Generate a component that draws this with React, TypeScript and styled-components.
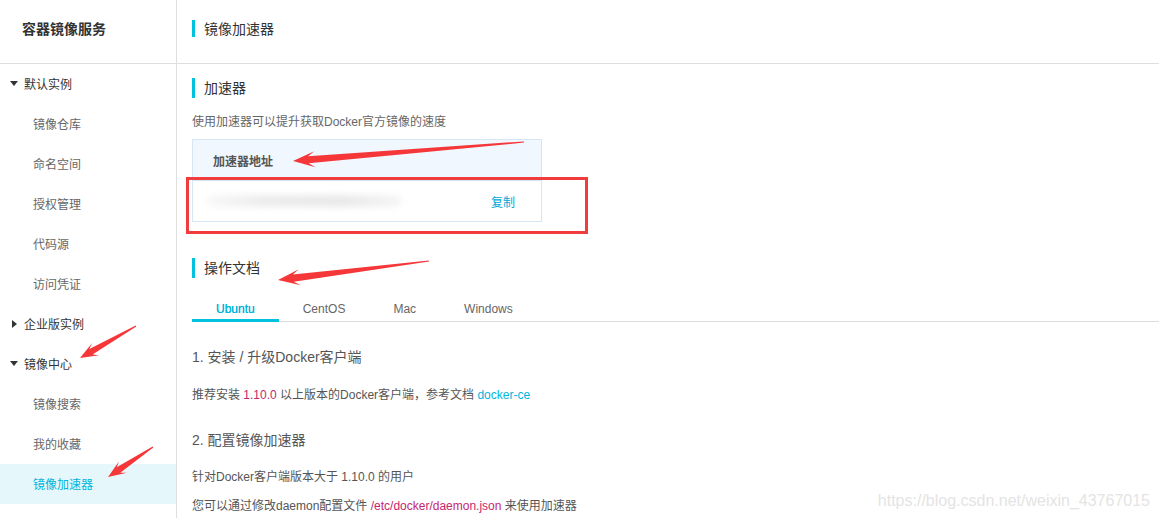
import styled, { createGlobalStyle } from "styled-components";

const GlobalStyle = createGlobalStyle`
  html, body {
    margin: 0;
    padding: 0;
    background: #fff;
  }
  body {
    font-family: "Liberation Sans", "Noto Sans CJK SC", sans-serif;
    color: #333;
  }
`

type INavItem = {
  text: string,
  level: number,
  open?: boolean,
  active?: boolean
}

const navItems = [
  {text: '默认实例', level: 0, open: true},
  {text: '镜像仓库', level: 1},
  {text: '命名空间', level: 1},
  {text: '授权管理', level: 1},
  {text: '代码源', level: 1},
  {text: '访问凭证', level: 1},
  {text: '企业版实例', level: 0, open: false},
  {text: '镜像中心', level: 0, open: true},
  {text: '镜像搜索', level: 1},
  {text: '我的收藏', level: 1},
  {text: '镜像加速器', level: 1, active: true},
] as INavItem[]

const tabs = ['Ubuntu', 'CentOS', 'Mac', 'Windows']

type Pt = [number, number]

// tapered arrow polygon, thin at the tail and a swept-back head at the tip
const arrowPoints = (tip: Pt, tail: Pt, len: number, head: number, neck: number) => {
  const dx = tip[0] - tail[0]
  const dy = tip[1] - tail[1]
  const l = Math.hypot(dx, dy)
  const ux = dx / l, uy = dy / l
  const nx = -uy, ny = ux
  const at = (back: number, side: number): Pt => [tip[0] - ux * back + nx * side, tip[1] - uy * back + ny * side]
  const pts: Pt[] = [
    [tail[0] + nx * 0.6, tail[1] + ny * 0.6],
    at(len * 0.7, neck),
    at(len, head),
    tip,
    at(len, -head),
    at(len * 0.7, -neck),
    [tail[0] - nx * 0.6, tail[1] - ny * 0.6],
  ]
  return pts.map(p => p.join(',')).join(' ')
}

const arrows = [
  {tip: [293, 161], tail: [524, 142], len: 22, head: 8, neck: 3.6},
  {tip: [278, 280], tail: [429, 261], len: 22, head: 8, neck: 3.6},
  {tip: [80, 358], tail: [136, 326], len: 18, head: 7, neck: 3.2},
  {tip: [108, 477], tail: [153, 447], len: 18, head: 7, neck: 3.2},
] as {tip: Pt, tail: Pt, len: number, head: number, neck: number}[]

const App = () => {
  return <Page>
    <GlobalStyle/>
    <Sidebar>
      <SideHeader>容器镜像服务</SideHeader>
      <NavList>
        {
          navItems.map((item, index) => (
            <NavItem key={`nav_${index}`} level={item.level} active={item.active}>
              {item.level === 0 && <Caret open={item.open}/>}
              {item.text}
            </NavItem>
          ))
        }
      </NavList>
    </Sidebar>
    <Main>
      <MainHeader>
        <TitleBar/>
        <span>镜像加速器</span>
      </MainHeader>
      <Content>
        <SectionTitle first>加速器</SectionTitle>
        <Desc>使用加速器可以提升获取Docker官方镜像的速度</Desc>
        <AddrBox>
          <AddrHead>加速器地址</AddrHead>
          <AddrRow>
            <Blurred/>
            <CopyLink>复制</CopyLink>
          </AddrRow>
        </AddrBox>

        <SectionTitle>操作文档</SectionTitle>
        <TabBar>
          {
            tabs.map((tab, index) => (
              <Tab key={`tab_${tab}`} active={index === 0}>{tab}</Tab>
            ))
          }
        </TabBar>

        <StepTitle gap={25}>1. 安装 / 升级Docker客户端</StepTitle>
        <Para gap={19}>
          推荐安装 <Code>1.10.0</Code> 以上版本的Docker客户端，参考文档 <DocLink>docker-ce</DocLink>
        </Para>
        <StepTitle gap={26}>2. 配置镜像加速器</StepTitle>
        <Para gap={18}>针对Docker客户端版本大于 1.10.0 的用户</Para>
        <Para gap={11}>
          您可以通过修改daemon配置文件 <Code>/etc/docker/daemon.json</Code> 来使用加速器
        </Para>
      </Content>
    </Main>

    <RedFrame/>
    <ArrowLayer width={1159} height={518} viewBox={'0 0 1159 518'}>
      {
        arrows.map((a, index) => (
          <polygon key={`arrow_${index}`} points={arrowPoints(a.tip, a.tail, a.len, a.head, a.neck)} fill={'#f5373a'}/>
        ))
      }
    </ArrowLayer>
    <Watermark>https://blog.csdn.net/weixin_43767015</Watermark>
  </Page>
}

export default App

const Page = styled.div`
  position: relative;
  display: flex;
  width: 100%;
  height: 100vh;
  overflow: hidden;
`

const Sidebar = styled.div`
  width: 176px;
  flex: 0 0 176px;
  border-right: 1px solid #dedede;
  display: flex;
  flex-direction: column;
`

const SideHeader = styled.div`
  height: 44px;
  padding-top: 19px;
  line-height: 20px;
  border-bottom: 1px solid #dedede;
  padding-left: 22px;
  font-size: 14px;
  font-weight: 700;
  color: #333;
`

const NavList = styled.div`
  display: flex;
  flex-direction: column;
`

const NavItem = styled.div<{level: number, active?: boolean}>`
  height: 40px;
  display: flex;
  align-items: center;
  padding-left: ${props => props.level === 0 ? '10px' : '33px'};
  padding-bottom: 1px;
  box-sizing: border-box;
  font-size: 12px;
  color: ${props => props.active ? '#00b5dc' : props.level === 0 ? '#333' : '#666'};
  background: ${props => props.active ? '#e5f7fb' : 'transparent'};
`

const Caret = styled.span<{open?: boolean}>`
  display: inline-block;
  width: 0;
  height: 0;
  margin-right: 6px;
  ${props => props.open
    ? `border-left: 4px solid transparent;
       border-right: 4px solid transparent;
       border-top: 5px solid #333;`
    : `border-top: 4px solid transparent;
       border-bottom: 4px solid transparent;
       border-left: 5px solid #333;
       margin-left: 2px;
       margin-right: 7px;`}
`

const Main = styled.div`
  flex: 1;
  display: flex;
  flex-direction: column;
  min-width: 0;
`

const MainHeader = styled.div`
  height: 44px;
  padding-top: 19px;
  border-bottom: 1px solid #dedede;
  display: flex;
  align-items: flex-start;
  padding-left: 15px;
  font-size: 14px;
  line-height: 20px;
  color: #333;
`

const TitleBar = styled.span`
  display: inline-block;
  width: 3px;
  height: 17px;
  margin-top: 1px;
  background: #00c1de;
  margin-right: 9px;
`

const Content = styled.div`
  padding-left: 15px;
  display: flex;
  flex-direction: column;
  align-items: flex-start;
`

const SectionTitle = styled.div<{first?: boolean}>`
  margin-top: ${props => props.first ? '14px' : '36px'};
  height: 20px;
  line-height: 20px;
  border-left: 3px solid #00c1de;
  padding-left: 9px;
  font-size: 14px;
  color: #333;
`

const Desc = styled.div`
  margin-top: 15px;
  line-height: 18px;
  font-size: 12px;
  color: #666;
`

const AddrBox = styled.div`
  margin-top: 8px;
  width: 348px;
  border: 1px solid #d7e6f4;
`

const AddrHead = styled.div`
  height: 40px;
  background: #f0f7fe;
  display: flex;
  align-items: center;
  padding-left: 20px;
  font-size: 12px;
  font-weight: 700;
  color: #555;
`

const AddrRow = styled.div`
  height: 40px;
  border-top: 1px solid #d7e6f4;
  display: flex;
  align-items: center;
  justify-content: space-between;
  padding: 0 26px 0 14px;
`

const Blurred = styled.div`
  width: 195px;
  height: 12px;
  border-radius: 6px;
  background: linear-gradient(90deg, #f8f8f8, #ececec 30%, #e9e9e9 70%, #f6f6f6);
  filter: blur(3px);
`

const CopyLink = styled.span`
  font-size: 12px;
  color: #00a8d8;
`

const TabBar = styled.div`
  margin-top: 18px;
  align-self: stretch;
  display: flex;
  border-bottom: 1px solid #dcdcdc;
`

const Tab = styled.div<{active?: boolean}>`
  padding: 3px 24px 0;
  line-height: 20px;
  margin-bottom: -1px;
  border-bottom: 3px solid ${props => props.active ? '#00c1de' : 'transparent'};
  font-size: 12px;
  font-weight: 400;
  color: ${props => props.active ? '#00b5dc' : '#666'};
  text-shadow: ${props => props.active ? '0 0 0.4px #00b5dc' : 'none'};
`

const StepTitle = styled.div<{gap: number}>`
  margin-top: ${props => props.gap}px;
  line-height: 20px;
  font-size: 14px;
  color: #555;
`

const Para = styled.div<{gap: number}>`
  margin-top: ${props => props.gap}px;
  line-height: 18px;
  font-size: 12px;
  color: #555;
`

const Code = styled.span`
  color: #c7256e;
`

const DocLink = styled.span`
  color: #00b5dc;
`

const RedFrame = styled.div`
  position: absolute;
  left: 186px;
  top: 177px;
  width: 396px;
  height: 51px;
  border: 3px solid #f03c3c;
  pointer-events: none;
`

const ArrowLayer = styled.svg`
  position: absolute;
  left: 0;
  top: 0;
  pointer-events: none;
`

const Watermark = styled.div`
  position: absolute;
  right: 9px;
  bottom: 8px;
  font-size: 16px;
  color: #e4e4e4;
  pointer-events: none;
`
